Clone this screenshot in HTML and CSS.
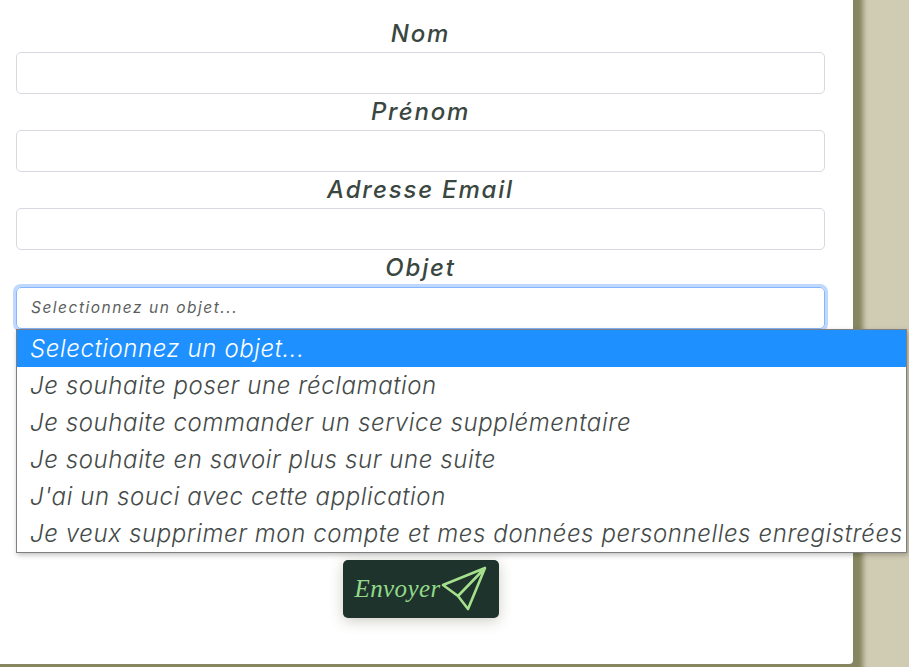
FILE: index.html
```html
<!DOCTYPE html>
<html lang="fr">
<head>
<meta charset="utf-8">
<title>Contact</title>
<link rel="stylesheet" href="styles.css">
</head>
<body>
<main class="card">
  <form class="form">
    <label class="label">Nom</label>
    <input class="field" type="text">
    <label class="label">Prénom</label>
    <input class="field" type="text">
    <label class="label">Adresse Email</label>
    <input class="field" type="text">
    <label class="label">Objet</label>
    <div class="select-wrap">
      <div class="select">Selectionnez un objet...</div>
      <ul class="menu">
        <li class="option option-active">Selectionnez un objet...</li>
        <li class="option">Je souhaite poser une réclamation</li>
        <li class="option">Je souhaite commander un service supplémentaire</li>
        <li class="option">Je souhaite en savoir plus sur une suite</li>
        <li class="option">J'ai un souci avec cette application</li>
        <li class="option">Je veux supprimer mon compte et mes données personnelles enregistrées</li>
      </ul>
    </div>
    <button class="send" type="button">
      <span class="send-text">Envoyer</span>
      <svg class="send-icon" viewBox="0 0 46 45" width="46" height="45" aria-hidden="true">
        <path d="M44 2 L2 19 L17 30 L27 43 Z M44 2 L17 30" fill="none" stroke="#a5e08c" stroke-width="2.6" stroke-linejoin="round" stroke-linecap="round"/>
      </svg>
    </button>
  </form>
</main>
</body>
</html>
```
FILE: styles.css
```css
html, body {
  margin: 0;
  height: 100%;
  overflow: hidden;
  background: #d0cbb3;
}
.card {
  box-sizing: border-box;
  width: 873px;
  height: 684px;
  margin: -20px 0 0 -20px;
  background: #fff;
  border-bottom-right-radius: 4px;
  box-shadow: 10px 10px 5px #868660;
  padding: 35.5px 28px 0 36px;
}
.form {
  display: flex;
  flex-direction: column;
  font-family: "Inter", "Open Sans", sans-serif;
}
.label {
  height: 36.3px;
  line-height: 36.3px;
  text-align: center;
  font-size: 24px;
  font-style: italic;
  font-weight: 500;
  letter-spacing: 1.8px;
  color: #3a4741;
}
.field {
  box-sizing: border-box;
  width: 100%;
  height: 42px;
  border: 1px solid #d6dae0;
  border-radius: 5px;
  background: #fff;
  outline: none;
  padding: 0;
}
.select-wrap {
  position: relative;
  height: 42px;
}
.select {
  box-sizing: border-box;
  height: 42px;
  border: 1px solid #86b7fe;
  border-radius: 5px;
  box-shadow: 0 0 0 3px #bfd8fd;
  padding: 0 14px;
  line-height: 40px;
  font-size: 15.5px;
  font-style: italic;
  font-weight: 400;
  letter-spacing: 1.5px;
  color: #5c5f5e;
}
.menu {
  position: absolute;
  top: 42px;
  left: 0;
  width: 891px;
  box-sizing: border-box;
  margin: 0;
  padding: 0;
  list-style: none;
  background: #fff;
  border: 1px solid #7f7f7f;
  box-shadow: 1px 2px 5px rgba(0, 0, 0, 0.25);
  z-index: 2;
}
.option {
  height: 37px;
  line-height: 37px;
  padding: 0 13px;
  font-size: 24px;
  font-style: italic;
  font-weight: 300;
  letter-spacing: 0.6px;
  color: #444a48;
  white-space: nowrap;
}
.option-active {
  background: #1e90ff;
  color: #fff;
}
.send {
  align-self: center;
  box-sizing: border-box;
  width: 156px;
  height: 58px;
  margin-top: 231px;
  padding: 0 0 0 12px;
  display: flex;
  align-items: center;
  justify-content: flex-start;
  background: #1e332c;
  border: none;
  border-radius: 5px;
  box-shadow: 0 3px 14px rgba(90, 90, 60, 0.3);
}
.send-text {
  flex: none;
  width: 86px;
  font-family: "Liberation Serif", serif;
  font-style: italic;
  font-size: 25px;
  letter-spacing: 0.4px;
  text-align: left;
  color: #93d98a;
}
.send-icon {
  flex: none;
  margin-top: -1px;
}
```
